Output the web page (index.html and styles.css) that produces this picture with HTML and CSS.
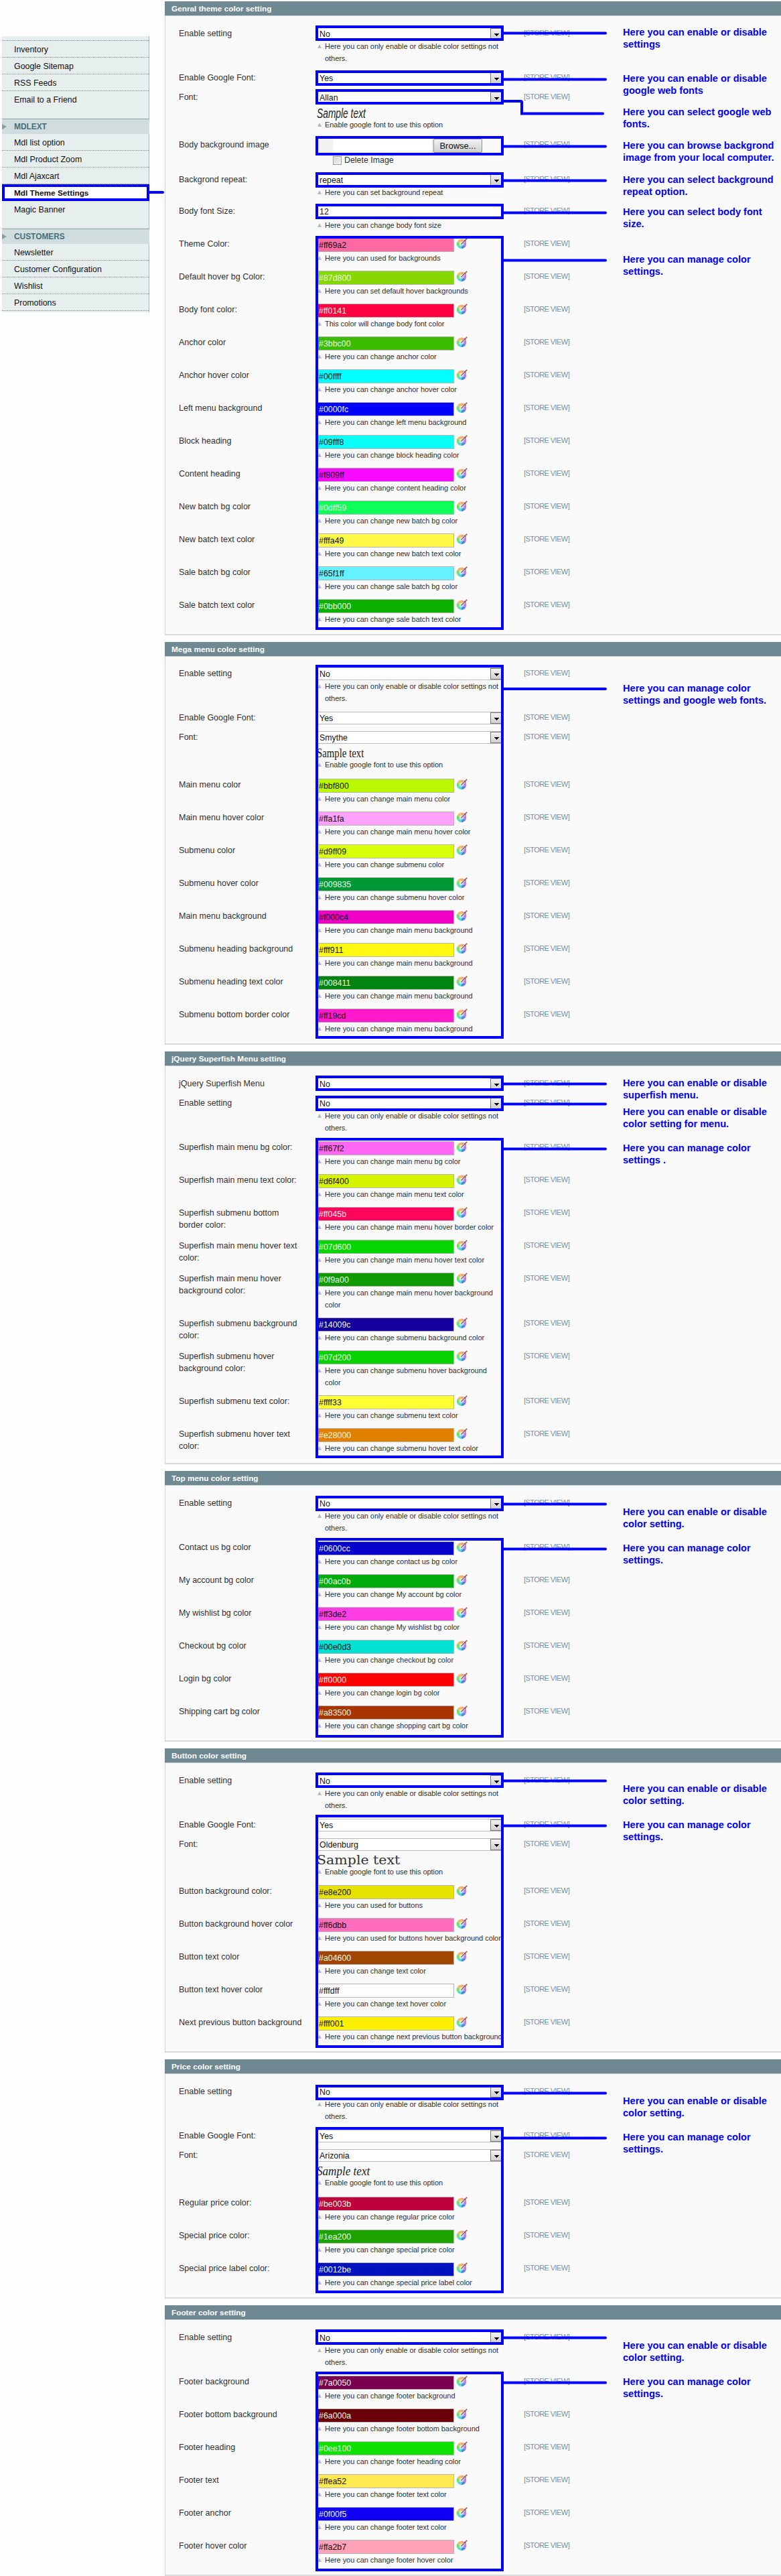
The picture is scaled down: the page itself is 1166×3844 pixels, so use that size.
FILE: index.html
```html
<!DOCTYPE html>
<html lang="en">
<head>
<meta charset="utf-8">
<title>Mdl Theme Settings</title>
<link rel="stylesheet" href="styles.css">
</head>
<body>
<svg class="defs" width="0" height="0" aria-hidden="true">
  <symbol id="pick" viewBox="0 0 16 16">
    <path d="M7 9V1.800A7.200 7.200 0 0 1 13.200 5.400Z" fill="#f2a08c"/>
    <path d="M7 9 13.200 5.400A7.200 7.200 0 0 1 13.200 12.600Z" fill="#c07be8"/>
    <path d="M7 9 13.200 12.600A7.200 7.200 0 0 1 7 16Z" fill="#5a7cf0"/>
    <path d="M7 9V16A7.200 7.200 0 0 1 .8 12.600Z" fill="#53dcd6"/>
    <path d="M7 9 .8 12.600A7.200 7.200 0 0 1 .8 5.400Z" fill="#74e06c"/>
    <path d="M7 9 .8 5.400A7.200 7.200 0 0 1 7 1.800Z" fill="#efbc6a"/>
    <circle cx="7" cy="9" r="3.400" fill="#fff" opacity=".55"/>
    <path d="M6.500 9.500 14 2" stroke="#fff" stroke-width="2.600"/>
    <path d="M6.500 9.500 12 4" stroke="#555" stroke-width="1.200"/>
    <path d="M11 3 13.500 5.500M12.500 3.500 15.300.8" stroke="#b5524c" stroke-width="1.700"/>
  </symbol>
</svg>
<div class="page">
<aside class="side">
  <ul>
    <li class="cut">Catalog</li><li>Inventory</li><li>Google Sitemap</li><li>RSS Feeds</li><li class="last">Email to a Friend</li>
  </ul>
  <h3>MDLEXT</h3>
  <ul>
    <li>Mdl list option</li><li>Mdl Product Zoom</li><li>Mdl Ajaxcart</li><li class="active">Mdl Theme Settings</li><li class="last">Magic Banner</li>
  </ul>
  <h3>CUSTOMERS</h3>
  <ul class="end">
    <li>Newsletter</li><li>Customer Configuration</li><li>Wishlist</li><li>Promotions</li>
  </ul>
</aside>
<main>
<section>
  <h2>Genral theme color setting</h2>
  <div class="rows">
    <div class="row"><label>Enable setting</label><div class="field"><div class="select">No</div><p>Here you can only enable or disable color settings not<br>others.</p></div><span class="scope">[STORE VIEW]</span></div>
    <div class="row"><label>Enable Google Font:</label><div class="field"><div class="select">Yes</div></div><span class="scope">[STORE VIEW]</span></div>
    <div class="row"><label>Font:</label><div class="field"><div class="select">Allan</div><div class="sample"><span class="allan">Sample text</span></div><p>Enable google font to use this option</p></div><span class="scope">[STORE VIEW]</span></div>
    <div class="row"><label>Body background image</label><div class="field"><div class="file"><span class="path"></span><span class="browse">Browse...</span></div><div class="check"><i></i>Delete Image</div></div><span class="scope">[STORE VIEW]</span></div>
    <div class="row tight"><label>Backgrond repeat:</label><div class="field"><div class="select">repeat</div><p>Here you can set background repeat</p></div><span class="scope">[STORE VIEW]</span></div>
    <div class="row"><label>Body font Size:</label><div class="field"><div class="text">12</div><p>Here you can change body font size</p></div><span class="scope">[STORE VIEW]</span></div>
    <div class="row"><label>Theme Color:</label><div class="field"><div class="color"><b style="background:#ff69a2">#ff69a2</b><svg><use href="#pick"/></svg></div><p>Here you can used for backgrounds</p></div><span class="scope">[STORE VIEW]</span></div>
    <div class="row"><label>Default hover bg Color:</label><div class="field"><div class="color lt"><b style="background:#87d800">#87d800</b><svg><use href="#pick"/></svg></div><p>Here you can set default hover backgrounds</p></div><span class="scope">[STORE VIEW]</span></div>
    <div class="row"><label>Body font color:</label><div class="field"><div class="color lt"><b style="background:#ff0141">#ff0141</b><svg><use href="#pick"/></svg></div><p>This color will change body font color</p></div><span class="scope">[STORE VIEW]</span></div>
    <div class="row"><label>Anchor color</label><div class="field"><div class="color lt"><b style="background:#3bbc00">#3bbc00</b><svg><use href="#pick"/></svg></div><p>Here you can change anchor color</p></div><span class="scope">[STORE VIEW]</span></div>
    <div class="row"><label>Anchor hover color</label><div class="field"><div class="color"><b style="background:#00ffff">#00ffff</b><svg><use href="#pick"/></svg></div><p>Here you can change anchor hover color</p></div><span class="scope">[STORE VIEW]</span></div>
    <div class="row"><label>Left menu background</label><div class="field"><div class="color lt"><b style="background:#0000fc">#0000fc</b><svg><use href="#pick"/></svg></div><p>Here you can change left menu background</p></div><span class="scope">[STORE VIEW]</span></div>
    <div class="row"><label>Block heading</label><div class="field"><div class="color"><b style="background:#09fff8">#09fff8</b><svg><use href="#pick"/></svg></div><p>Here you can change block heading color</p></div><span class="scope">[STORE VIEW]</span></div>
    <div class="row"><label>Content heading</label><div class="field"><div class="color"><b style="background:#f809ff">#f809ff</b><svg><use href="#pick"/></svg></div><p>Here you can change content heading color</p></div><span class="scope">[STORE VIEW]</span></div>
    <div class="row"><label>New batch bg color</label><div class="field"><div class="color lt"><b style="background:#0dff59">#0dff59</b><svg><use href="#pick"/></svg></div><p>Here you can change new batch bg color</p></div><span class="scope">[STORE VIEW]</span></div>
    <div class="row"><label>New batch text color</label><div class="field"><div class="color"><b style="background:#fffa49">#fffa49</b><svg><use href="#pick"/></svg></div><p>Here you can change new batch text color</p></div><span class="scope">[STORE VIEW]</span></div>
    <div class="row"><label>Sale batch bg color</label><div class="field"><div class="color"><b style="background:#65f1ff">#65f1ff</b><svg><use href="#pick"/></svg></div><p>Here you can change sale batch bg color</p></div><span class="scope">[STORE VIEW]</span></div>
    <div class="row"><label>Sale batch text color</label><div class="field"><div class="color lt"><b style="background:#0bb000">#0bb000</b><svg><use href="#pick"/></svg></div><p>Here you can change sale batch text color</p></div><span class="scope">[STORE VIEW]</span></div>
  </div>
</section>
<section class="mega">
  <h2>Mega menu color setting</h2>
  <div class="rows">
    <div class="row"><label>Enable setting</label><div class="field"><div class="select">No</div><p>Here you can only enable or disable color settings not<br>others.</p></div><span class="scope">[STORE VIEW]</span></div>
    <div class="row"><label>Enable Google Font:</label><div class="field"><div class="select">Yes</div></div><span class="scope">[STORE VIEW]</span></div>
    <div class="row"><label>Font:</label><div class="field"><div class="select">Smythe</div><div class="sample"><span class="smythe">Sample text</span></div><p>Enable google font to use this option</p></div><span class="scope">[STORE VIEW]</span></div>
    <div class="row"><label>Main menu color</label><div class="field"><div class="color"><b style="background:#bbf800">#bbf800</b><svg><use href="#pick"/></svg></div><p>Here you can change main menu color</p></div><span class="scope">[STORE VIEW]</span></div>
    <div class="row"><label>Main menu hover color</label><div class="field"><div class="color"><b style="background:#ffa1fa">#ffa1fa</b><svg><use href="#pick"/></svg></div><p>Here you can change main menu hover color</p></div><span class="scope">[STORE VIEW]</span></div>
    <div class="row"><label>Submenu color</label><div class="field"><div class="color"><b style="background:#d9ff09">#d9ff09</b><svg><use href="#pick"/></svg></div><p>Here you can change submenu color</p></div><span class="scope">[STORE VIEW]</span></div>
    <div class="row"><label>Submenu hover color</label><div class="field"><div class="color lt"><b style="background:#009835">#009835</b><svg><use href="#pick"/></svg></div><p>Here you can change submenu hover color</p></div><span class="scope">[STORE VIEW]</span></div>
    <div class="row"><label>Main menu background</label><div class="field"><div class="color"><b style="background:#f000c4">#f000c4</b><svg><use href="#pick"/></svg></div><p>Here you can change main menu background</p></div><span class="scope">[STORE VIEW]</span></div>
    <div class="row"><label>Submenu heading background</label><div class="field"><div class="color"><b style="background:#fff911">#fff911</b><svg><use href="#pick"/></svg></div><p>Here you can change main menu background</p></div><span class="scope">[STORE VIEW]</span></div>
    <div class="row"><label>Submenu heading text color</label><div class="field"><div class="color lt"><b style="background:#008411">#008411</b><svg><use href="#pick"/></svg></div><p>Here you can change main menu background</p></div><span class="scope">[STORE VIEW]</span></div>
    <div class="row"><label>Submenu bottom border color</label><div class="field"><div class="color"><b style="background:#ff19cd">#ff19cd</b><svg><use href="#pick"/></svg></div><p>Here you can change main menu background</p></div><span class="scope">[STORE VIEW]</span></div>
  </div>
</section>
<section>
  <h2>jQuery Superfish Menu setting</h2>
  <div class="rows">
    <div class="row"><label>jQuery Superfish Menu</label><div class="field"><div class="select">No</div></div><span class="scope">[STORE VIEW]</span></div>
    <div class="row"><label>Enable setting</label><div class="field"><div class="select">No</div><p>Here you can only enable or disable color settings not<br>others.</p></div><span class="scope">[STORE VIEW]</span></div>
    <div class="row"><label>Superfish main menu bg color:</label><div class="field"><div class="color"><b style="background:#ff67f2">#ff67f2</b><svg><use href="#pick"/></svg></div><p>Here you can change main menu bg color</p></div><span class="scope">[STORE VIEW]</span></div>
    <div class="row"><label>Superfish main menu text color:</label><div class="field"><div class="color"><b style="background:#d6f400">#d6f400</b><svg><use href="#pick"/></svg></div><p>Here you can change main menu text color</p></div><span class="scope">[STORE VIEW]</span></div>
    <div class="row"><label>Superfish submenu bottom<br>border color:</label><div class="field"><div class="color lt"><b style="background:#ff045b">#ff045b</b><svg><use href="#pick"/></svg></div><p>Here you can change main menu hover border color</p></div><span class="scope">[STORE VIEW]</span></div>
    <div class="row"><label>Superfish main menu hover text<br>color:</label><div class="field"><div class="color lt"><b style="background:#07d600">#07d600</b><svg><use href="#pick"/></svg></div><p>Here you can change main menu hover text color</p></div><span class="scope">[STORE VIEW]</span></div>
    <div class="row"><label>Superfish main menu hover<br>background color:</label><div class="field"><div class="color lt"><b style="background:#0f9a00">#0f9a00</b><svg><use href="#pick"/></svg></div><p>Here you can change main menu hover background<br>color</p></div><span class="scope">[STORE VIEW]</span></div>
    <div class="row"><label>Superfish submenu background<br>color:</label><div class="field"><div class="color lt"><b style="background:#14009c">#14009c</b><svg><use href="#pick"/></svg></div><p>Here you can change submenu background color</p></div><span class="scope">[STORE VIEW]</span></div>
    <div class="row"><label>Superfish submenu hover<br>background color:</label><div class="field"><div class="color lt"><b style="background:#07d200">#07d200</b><svg><use href="#pick"/></svg></div><p>Here you can change submenu hover background<br>color</p></div><span class="scope">[STORE VIEW]</span></div>
    <div class="row"><label>Superfish submenu text color:</label><div class="field"><div class="color"><b style="background:#ffff33">#ffff33</b><svg><use href="#pick"/></svg></div><p>Here you can change submenu text color</p></div><span class="scope">[STORE VIEW]</span></div>
    <div class="row"><label>Superfish submenu hover text<br>color:</label><div class="field"><div class="color lt"><b style="background:#e28000">#e28000</b><svg><use href="#pick"/></svg></div><p>Here you can change submenu hover text color</p></div><span class="scope">[STORE VIEW]</span></div>
  </div>
</section>
<section>
  <h2>Top menu color setting</h2>
  <div class="rows">
    <div class="row"><label>Enable setting</label><div class="field"><div class="select">No</div><p>Here you can only enable or disable color settings not<br>others.</p></div><span class="scope">[STORE VIEW]</span></div>
    <div class="row"><label>Contact us bg color</label><div class="field"><div class="color lt"><b style="background:#0600cc">#0600cc</b><svg><use href="#pick"/></svg></div><p>Here you can change contact us bg color</p></div><span class="scope">[STORE VIEW]</span></div>
    <div class="row"><label>My account bg color</label><div class="field"><div class="color lt"><b style="background:#00ac0b">#00ac0b</b><svg><use href="#pick"/></svg></div><p>Here you can change My account bg color</p></div><span class="scope">[STORE VIEW]</span></div>
    <div class="row"><label>My wishlist bg color</label><div class="field"><div class="color"><b style="background:#ff3de2">#ff3de2</b><svg><use href="#pick"/></svg></div><p>Here you can change My wishlist bg color</p></div><span class="scope">[STORE VIEW]</span></div>
    <div class="row"><label>Checkout bg color</label><div class="field"><div class="color"><b style="background:#00e0d3">#00e0d3</b><svg><use href="#pick"/></svg></div><p>Here you can change checkout bg color</p></div><span class="scope">[STORE VIEW]</span></div>
    <div class="row"><label>Login bg color</label><div class="field"><div class="color lt"><b style="background:#ff0000">#ff0000</b><svg><use href="#pick"/></svg></div><p>Here you can change login bg color</p></div><span class="scope">[STORE VIEW]</span></div>
    <div class="row"><label>Shipping cart bg color</label><div class="field"><div class="color lt"><b style="background:#a83500">#a83500</b><svg><use href="#pick"/></svg></div><p>Here you can change shopping cart bg color</p></div><span class="scope">[STORE VIEW]</span></div>
  </div>
</section>
<section>
  <h2>Button color setting</h2>
  <div class="rows">
    <div class="row"><label>Enable setting</label><div class="field"><div class="select">No</div><p>Here you can only enable or disable color settings not<br>others.</p></div><span class="scope">[STORE VIEW]</span></div>
    <div class="row"><label>Enable Google Font:</label><div class="field"><div class="select">Yes</div></div><span class="scope">[STORE VIEW]</span></div>
    <div class="row tight"><label>Font:</label><div class="field"><div class="select">Oldenburg</div><div class="sample"><span class="oldenburg">Sample text</span></div><p>Enable google font to use this option</p></div><span class="scope">[STORE VIEW]</span></div>
    <div class="row"><label>Button background color:</label><div class="field"><div class="color"><b style="background:#e8e200">#e8e200</b><svg><use href="#pick"/></svg></div><p>Here you can used for buttons</p></div><span class="scope">[STORE VIEW]</span></div>
    <div class="row"><label>Button background hover color</label><div class="field"><div class="color"><b style="background:#ff6dbb">#ff6dbb</b><svg><use href="#pick"/></svg></div><p>Here you can used for buttons hover background color</p></div><span class="scope">[STORE VIEW]</span></div>
    <div class="row"><label>Button text color</label><div class="field"><div class="color lt"><b style="background:#a04600">#a04600</b><svg><use href="#pick"/></svg></div><p>Here you can change text color</p></div><span class="scope">[STORE VIEW]</span></div>
    <div class="row"><label>Button text hover color</label><div class="field"><div class="color"><b style="background:#fffdff">#fffdff</b><svg><use href="#pick"/></svg></div><p>Here you can change text hover color</p></div><span class="scope">[STORE VIEW]</span></div>
    <div class="row"><label>Next previous button background</label><div class="field"><div class="color"><b style="background:#fff001">#fff001</b><svg><use href="#pick"/></svg></div><p>Here you can change next previous button background</p></div><span class="scope">[STORE VIEW]</span></div>
  </div>
</section>
<section>
  <h2>Price color setting</h2>
  <div class="rows">
    <div class="row"><label>Enable setting</label><div class="field"><div class="select">No</div><p>Here you can only enable or disable color settings not<br>others.</p></div><span class="scope">[STORE VIEW]</span></div>
    <div class="row"><label>Enable Google Font:</label><div class="field"><div class="select">Yes</div></div><span class="scope">[STORE VIEW]</span></div>
    <div class="row"><label>Font:</label><div class="field"><div class="select">Arizonia</div><div class="sample"><span class="arizonia">Sample text</span></div><p>Enable google font to use this option</p></div><span class="scope">[STORE VIEW]</span></div>
    <div class="row"><label>Regular price color:</label><div class="field"><div class="color lt"><b style="background:#be003b">#be003b</b><svg><use href="#pick"/></svg></div><p>Here you can change regular price color</p></div><span class="scope">[STORE VIEW]</span></div>
    <div class="row"><label>Special price color:</label><div class="field"><div class="color lt"><b style="background:#1ea200">#1ea200</b><svg><use href="#pick"/></svg></div><p>Here you can change special price color</p></div><span class="scope">[STORE VIEW]</span></div>
    <div class="row"><label>Special price label color:</label><div class="field"><div class="color lt"><b style="background:#0012be">#0012be</b><svg><use href="#pick"/></svg></div><p>Here you can change special price label color</p></div><span class="scope">[STORE VIEW]</span></div>
  </div>
</section>
<section>
  <h2>Footer color setting</h2>
  <div class="rows">
    <div class="row"><label>Enable setting</label><div class="field"><div class="select">No</div><p>Here you can only enable or disable color settings not<br>others.</p></div><span class="scope">[STORE VIEW]</span></div>
    <div class="row"><label>Footer background</label><div class="field"><div class="color lt"><b style="background:#7a0050">#7a0050</b><svg><use href="#pick"/></svg></div><p>Here you can change footer background</p></div><span class="scope">[STORE VIEW]</span></div>
    <div class="row"><label>Footer bottom background</label><div class="field"><div class="color lt"><b style="background:#6a000a">#6a000a</b><svg><use href="#pick"/></svg></div><p>Here you can change footer bottom background</p></div><span class="scope">[STORE VIEW]</span></div>
    <div class="row"><label>Footer heading</label><div class="field"><div class="color lt"><b style="background:#0ee100">#0ee100</b><svg><use href="#pick"/></svg></div><p>Here you can change footer heading color</p></div><span class="scope">[STORE VIEW]</span></div>
    <div class="row"><label>Footer text</label><div class="field"><div class="color"><b style="background:#ffea52">#ffea52</b><svg><use href="#pick"/></svg></div><p>Here you can change footer text color</p></div><span class="scope">[STORE VIEW]</span></div>
    <div class="row"><label>Footer anchor</label><div class="field"><div class="color lt"><b style="background:#0f00f5">#0f00f5</b><svg><use href="#pick"/></svg></div><p>Here you can change footer text color</p></div><span class="scope">[STORE VIEW]</span></div>
    <div class="row"><label>Footer hover color</label><div class="field"><div class="color"><b style="background:#ffa2b7">#ffa2b7</b><svg><use href="#pick"/></svg></div><p>Here you can change footer hover color</p></div><span class="scope">[STORE VIEW]</span></div>
  </div>
</section>
</main>
<!-- callouts drawn over the form: frames, connectors and remarks -->
<svg class="callouts" width="1166" height="3844" viewBox="0 0 1166 3844">
  <g class="frame">
    <rect x="5" y="277" width="216" height="21"/>
    <rect x="473" y="40" width="277" height="19"/>
    <rect x="473" y="107" width="277" height="19"/>
    <rect x="473" y="135" width="277" height="19"/>
    <rect x="473" y="205" width="277" height="25"/>
    <rect x="473" y="259" width="277" height="19"/>
    <rect x="473" y="306" width="277" height="19"/>
    <rect x="473" y="354" width="277" height="584"/>
    <rect x="473" y="994" width="277" height="554"/>
    <rect x="473" y="1607" width="277" height="19"/>
    <rect x="473" y="1637" width="277" height="19"/>
    <rect x="473" y="1700" width="277" height="474"/>
    <rect x="473" y="2234" width="277" height="19"/>
    <rect x="473" y="2297" width="277" height="294"/>
    <rect x="473" y="2647" width="277" height="19"/>
    <rect x="473" y="2710" width="277" height="344"/>
    <rect x="473" y="3113" width="277" height="19"/>
    <rect x="473" y="3176" width="277" height="244"/>
    <rect x="473" y="3478" width="277" height="19"/>
    <rect x="473" y="3541" width="277" height="294"/>
  </g>
  <path class="wire" d="M222 287H243M752 49.500H904M752 118.500H904M752 151H777.500Q779 151 779 152.500V169.500H900M752 218.500H904M752 269.500H904M752 317.500H904M752 388.500H904M752 1028H904M752 1617.500H904M752 1647.500H904M752 1714.500H904M752 2244.500H904M752 2311.500H904M752 2657.500H904M752 2724.500H904M752 3123.500H904M752 3190.500H904M752 3488.500H904M752 3555.500H904"/>
  <g class="remark">
    <text y="53"><tspan x="930">Here you can enable or disable</tspan><tspan x="930" dy="18">settings</tspan></text>
    <text y="122"><tspan x="930">Here you can enable or disable</tspan><tspan x="930" dy="18">google web fonts</tspan></text>
    <text y="172"><tspan x="930">Here you can select google web</tspan><tspan x="930" dy="18">fonts.</tspan></text>
    <text y="222"><tspan x="930">Here you can browse backgrond</tspan><tspan x="930" dy="18">image from your local computer.</tspan></text>
    <text y="273"><tspan x="930">Here you can select background</tspan><tspan x="930" dy="18">repeat option.</tspan></text>
    <text y="321"><tspan x="930">Here you can select body font</tspan><tspan x="930" dy="18">size.</tspan></text>
    <text y="392"><tspan x="930">Here you can manage color</tspan><tspan x="930" dy="18">settings.</tspan></text>
    <text y="1032"><tspan x="930">Here you can manage color</tspan><tspan x="930" dy="18">settings and google web fonts.</tspan></text>
    <text y="1621"><tspan x="930">Here you can enable or disable</tspan><tspan x="930" dy="18">superfish menu.</tspan></text>
    <text y="1664"><tspan x="930">Here you can enable or disable</tspan><tspan x="930" dy="18">color setting for menu.</tspan></text>
    <text y="1718"><tspan x="930">Here you can manage color</tspan><tspan x="930" dy="18">settings .</tspan></text>
    <text y="2261"><tspan x="930">Here you can enable or disable</tspan><tspan x="930" dy="18">color setting.</tspan></text>
    <text y="2315"><tspan x="930">Here you can manage color</tspan><tspan x="930" dy="18">settings.</tspan></text>
    <text y="2674"><tspan x="930">Here you can enable or disable</tspan><tspan x="930" dy="18">color setting.</tspan></text>
    <text y="2728"><tspan x="930">Here you can manage color</tspan><tspan x="930" dy="18">settings.</tspan></text>
    <text y="3140"><tspan x="930">Here you can enable or disable</tspan><tspan x="930" dy="18">color setting.</tspan></text>
    <text y="3194"><tspan x="930">Here you can manage color</tspan><tspan x="930" dy="18">settings.</tspan></text>
    <text y="3505"><tspan x="930">Here you can enable or disable</tspan><tspan x="930" dy="18">color setting.</tspan></text>
    <text y="3559"><tspan x="930">Here you can manage color</tspan><tspan x="930" dy="18">settings.</tspan></text>
  </g>
</svg>
</div>
</body>
</html>
```
FILE: styles.css
```css
* { box-sizing: border-box; }
body {
  margin: 0;
  background: #fefefe;
  font: 12.4px/18px "Liberation Sans", Arial, sans-serif;
  color: #2f2f2f;
}
.defs { display: block; height: 0; }
.page {
  position: relative;
  display: flex;
  width: 1166px;
  height: 3844px;
  overflow: hidden;
}

/* left navigation */
.side {
  flex: none;
  width: 220px;
  height: 412px;
  margin: 54px 23px 0 3px;
  background: #e7efee;
  border-right: 1px solid #a9bbbc;
}
.side ul { margin: 0; padding: 0 0 16px; list-style: none; }
.side ul.end { padding: 0; }
.side li {
  height: 25px;
  padding-left: 18px;
  line-height: 26px;
  color: #111;
  border-bottom: 1px dotted #7d8f90;
}
.side li.cut {
  display: flex;
  align-items: flex-end;
  height: 7px;
  overflow: hidden;
}
.side li.last { border-bottom: 0; }
.side li.active {
  background: #fff;
  border: 0;
  font-weight: bold;
  font-size: 11.8px;
}
.side h3 {
  display: flex;
  align-items: center;
  gap: 11px;
  height: 23px;
  margin: 0 -1px 0 0;
  background: #d0dcdd;
  border-top: 1px solid #8ea3a5;
  font-size: 11.9px;
  color: #44707b;
}
.side h3::before {
  content: "";
  border: 4px solid transparent;
  border-width: 4px 0 4px 7px;
  border-left-color: #83a0a5;
}

/* setting groups */
main {
  flex: 1;
  display: flex;
  flex-direction: column;
  gap: 10px;
  padding-top: 2px;
}
section {
  background: #fafafa;
  border-left: 1px solid #d3d5d5;
  border-bottom: 2px solid #d8dada;
}
section h2 {
  height: 22px;
  margin: 0 0 0 -1px;
  padding-left: 10px;
  background: #6f8992;
  border-bottom: 1px solid #c5d0d3;
  font-size: 11.8px;
  line-height: 23px;
  color: #fff;
}
.rows { padding: 17px 0 3px 20px; }
.mega .rows { padding-top: 16px; }
.row { display: flex; padding-bottom: 10px; }
.row:has(p) { padding-bottom: 11px; }
.row.tight { padding-bottom: 10px; }
.row:has(.color) p, .row:has(.text) p { margin-bottom: -1px; }
.row:has(.sample) p { margin-bottom: 1px; }
label {
  flex: none;
  width: 206px;
  font-size: 12.5px;
  white-space: nowrap;
}
.field { flex: none; width: 279px; }
.field p {
  position: relative;
  margin: 0;
  padding-left: 12px;
  font-size: 11px;
  letter-spacing: -.05px;
  white-space: nowrap;
}
.field p::before {
  content: "";
  position: absolute;
  left: 1px;
  top: 6px;
  border: 3px solid transparent;
  border-width: 0 3px 6px;
  border-bottom-color: #b3bcbb;
}
.scope {
  margin: -1px 0 0 30px;
  height: 18px;
  font-size: 11px;
  letter-spacing: -.57px;
  color: #78919a;
}

/* controls */
.select {
  display: flex;
  justify-content: space-between;
  height: 19px;
  padding-left: 3px;
  background: #fff;
  border: 1px solid #bbb;
  color: #111;
}
.select::after {
  content: "";
  width: 17px;
  border: 1px solid #777;
  background:
    linear-gradient(#000, #000) 5px 7px / 7px 1px no-repeat,
    linear-gradient(#000, #000) 6px 8px / 5px 1px no-repeat,
    linear-gradient(#000, #000) 7px 9px / 3px 1px no-repeat,
    linear-gradient(#000, #000) 8px 10px / 1px 1px no-repeat,
    linear-gradient(#f3f3f3, #cfcfcf);
}
.text {
  height: 21px;
  padding-left: 3px;
  background: #fff;
  border: 1px solid #bbb;
  color: #111;
}
.color { display: flex; gap: 4px; height: 21px; }
.color b {
  width: 205px;
  padding-left: 2px;
  border: 1px solid #b4b4b4;
  font-weight: normal;
  line-height: 20px;
  color: #111;
}
.color.lt b { color: #e8f6e4; }
.color svg { width: 16px; height: 16px; }
.file {
  display: flex;
  height: 23px;
  margin-top: -1px;
  padding-left: 24px;
  background: linear-gradient(90deg, #f1f1f1 24px, #fff 24px 245px, #fafafa 245px);
}
.path { width: 149px; border-right: 1px solid #ddd; }
.browse {
  width: 73px;
  height: 21px;
  margin: 1px 0 0 1px;
  border: 1px solid #8d8d8d;
  border-radius: 2px;
  background: linear-gradient(#f2f2f2, #cfcfcf);
  font-size: 13px;
  line-height: 20px;
  text-align: center;
  color: #111;
}
.check { display: flex; align-items: center; gap: 4px; height: 20px; padding-left: 24px; }
.check i {
  width: 13px;
  height: 13px;
  border: 1px solid #999;
  background: linear-gradient(135deg, #ccc, #f6f6f6);
  box-shadow: inset 0 0 0 1px #eee;
}

/* font previews */
.sample { height: 22px; line-height: 28px; white-space: nowrap; color: #222; }
.sample span { display: inline-block; transform-origin: 0 50%; }
.allan { font: italic 20px/28px "Liberation Sans", sans-serif; transform: scaleX(.69); }
.smythe { font: 19px/28px "Liberation Serif", serif; transform: scaleX(.78); }
.oldenburg { font: 19px/26px "DejaVu Serif", serif; transform: scaleX(1.08); color: #333; }
.arizonia { font: italic 19px/27px "Liberation Serif", serif; transform: scaleX(.9); }

/* overlay */
.callouts { position: absolute; left: 0; top: 0; }
.frame rect { fill: none; stroke: #00f; stroke-width: 4; }
.wire { fill: none; stroke: #00f; stroke-width: 4; stroke-linecap: round; }
.remark { fill: #00f; font: bold 14.6px "Liberation Sans", Arial, sans-serif; }
```
